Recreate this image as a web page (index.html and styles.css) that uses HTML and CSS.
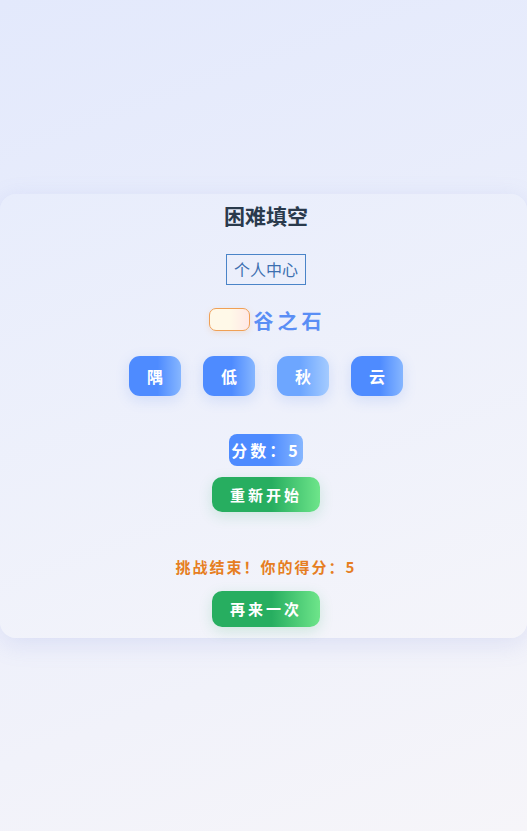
FILE: index.html
```html
<!DOCTYPE html>
<html lang="zh">
<head>
<meta charset="utf-8">
<title>困难填空</title>
<link rel="stylesheet" href="styles.css">
</head>
<body>
<main class="card">
  <h2 class="title">困难填空</h2>
  <button class="profile-btn">个人中心</button>
  <div class="question">
    <input class="blank" type="text">
    <span class="phrase">谷之石</span>
  </div>
  <div class="options">
    <button class="opt">隅</button>
    <button class="opt">低</button>
    <button class="opt opt-light">秋</button>
    <button class="opt">云</button>
  </div>
  <div class="score">分数：5</div>
  <button class="green-btn">重新开始</button>
  <p class="result">挑战结束！你的得分：5</p>
  <button class="green-btn">再来一次</button>
</main>
</body>
</html>
```

FILE: styles.css
```css
* { box-sizing: border-box; }
html, body { margin: 0; padding: 0; }
body {
  min-height: 100vh;
  display: flex;
  align-items: center;
  justify-content: center;
  background: linear-gradient(160deg, #e3e9fc 0%, #eceffb 50%, #f6f5f9 100%);
  font-family: "Noto Sans CJK SC", "Noto Sans", sans-serif;
}
.card {
  width: 100%;
  display: flex;
  flex-direction: column;
  align-items: center;
  padding: 7px 0 11px 5px;
  border-radius: 16px;
  background: linear-gradient(160deg, rgba(232,237,252,0.9), rgba(245,245,250,0.9));
  box-shadow: 0 6px 24px rgba(120,140,220,0.18);
}
.title {
  margin: 0;
  font-size: 21px;
  line-height: 29px;
  font-weight: 700;
  color: #2a3a4c;
}
.profile-btn {
  margin-top: 24px;
  width: 80px;
  height: 31px;
  padding: 0;
  border: 1px solid #4a84c8;
  background: transparent;
  color: #3d6fb0;
  font-family: inherit;
  font-size: 16px;
}
.question {
  margin-top: 21px;
  display: flex;
  align-items: center;
  justify-content: center;
  padding-left: 2px;
}
.blank {
  width: 41px;
  height: 23px;
  border: 1px solid #f0a055;
  border-radius: 7px;
  background: linear-gradient(90deg, #fff9e8 50%, #ffe8e6 100%);
  box-shadow: 0 2px 6px rgba(240,160,85,0.2);
  margin: -2px 4px 0 0;
}
.phrase {
  font-size: 20px;
  font-weight: 700;
  color: #5a8ef5;
  letter-spacing: 4px;
}
.options {
  margin-top: 21px;
  display: flex;
  gap: 22px;
  justify-content: center;
}
.opt {
  width: 52px;
  height: 40px;
  border: none;
  border-radius: 11px;
  background: linear-gradient(90deg, #4e8bff 55%, #86b6ff 100%);
  color: #fff;
  font-family: inherit;
  font-size: 16px;
  font-weight: 700;
  box-shadow: 0 4px 14px rgba(80,130,240,0.18);
}
.opt-light {
  background: linear-gradient(90deg, #6da6ff 45%, #a4cbff 100%);
}
.score {
  margin-top: 38px;
  width: 74px;
  height: 32px;
  border-radius: 8px;
  background: linear-gradient(90deg, #4e8bff 55%, #86b6ff 100%);
  color: #fff;
  font-size: 16px;
  font-weight: 700;
  letter-spacing: 3px;
  line-height: 32px;
  text-align: center;
  white-space: nowrap;
}
.green-btn {
  margin-top: 11px;
  width: 108px;
  height: 35px;
  border: none;
  border-radius: 10px;
  background: linear-gradient(90deg, #27ae60 55%, #6ee58a 100%);
  color: #fff;
  font-family: inherit;
  font-size: 15px;
  font-weight: 700;
  letter-spacing: 3px;
  box-shadow: 0 4px 14px rgba(39,174,96,0.18);
}
.result {
  margin: 44px 0 0;
  font-size: 15px;
  line-height: 22px;
  font-weight: 700;
  color: #e67e22;
  letter-spacing: 2px;
}
.result + .green-btn {
  margin-top: 13px;
  height: 36px;
}
```
